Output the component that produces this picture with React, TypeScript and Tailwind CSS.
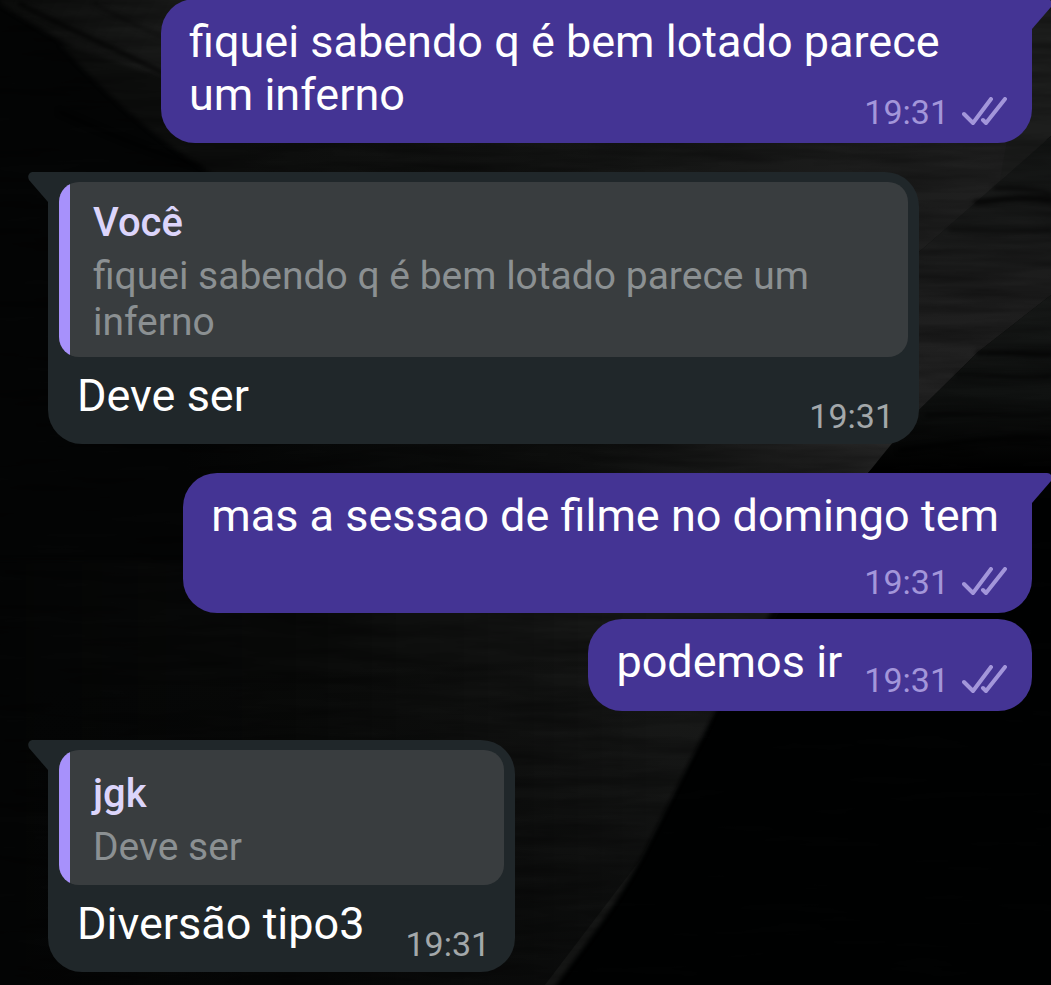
import type { ReactNode } from "react";
import clsx from "clsx";

type Quote = { author: string; text: string };

type Message = {
  id: number;
  side: "in" | "out";
  text: string;
  time: string;
  quote?: Quote;
  /** first bubble of a group gets the pointed corner */
  tail?: boolean;
  /** where the time sits relative to the text */
  meta: "inline" | "below" | "float";
};

const MESSAGES: Message[] = [
  { id: 1, side: "out", text: "fiquei sabendo q é bem lotado parece um inferno", time: "19:31", tail: true, meta: "float" },
  {
    id: 2,
    side: "in",
    text: "Deve ser",
    time: "19:31",
    tail: true,
    meta: "inline",
    quote: { author: "Você", text: "fiquei sabendo q é bem lotado parece um inferno" },
  },
  { id: 3, side: "out", text: "mas a sessao de filme no domingo tem", time: "19:31", tail: true, meta: "below" },
  { id: 4, side: "out", text: "podemos ir", time: "19:31", meta: "inline" },
  { id: 5, side: "in", text: "Diversão tipo3", time: "19:31", tail: true, meta: "inline", quote: { author: "jgk", text: "Deve ser" } },
];

function Wallpaper() {
  return (
    <svg
      className="absolute inset-0 h-full w-full"
      viewBox="0 0 1051 985"
      preserveAspectRatio="none"
      aria-hidden="true"
    >
      <defs>
        <linearGradient id="topLeft" x1="0" y1="0" x2="1" y2="0.3">
          <stop offset="0" stopColor="#0c0d0c" />
          <stop offset="0.4" stopColor="#191a19" />
          <stop offset="1" stopColor="#161716" />
        </linearGradient>
        <linearGradient id="ridge" x1="0" y1="0" x2="1" y2="0">
          <stop offset="0" stopColor="#0d0e0d" />
          <stop offset="0.5" stopColor="#151615" />
          <stop offset="1" stopColor="#222222" />
        </linearGradient>
        <linearGradient id="slope" x1="0" y1="0" x2="0" y2="1">
          <stop offset="0" stopColor="#141615" />
          <stop offset="0.5" stopColor="#1e1e1e" />
          <stop offset="1" stopColor="#282828" />
        </linearGradient>
        <linearGradient id="shade" x1="0" y1="0" x2="0" y2="1">
          <stop offset="0" stopColor="#181a19" />
          <stop offset="0.6" stopColor="#0f1110" />
          <stop offset="1" stopColor="#000000" />
        </linearGradient>
        <linearGradient id="strip" x1="0" y1="0" x2="1" y2="0">
          <stop offset="0.2" stopColor="#040505" />
          <stop offset="0.65" stopColor="#0e0f0e" />
          <stop offset="1" stopColor="#282828" />
        </linearGradient>
        <linearGradient id="base" x1="0" y1="0" x2="1" y2="0">
          <stop offset="0" stopColor="#040505" />
          <stop offset="0.4" stopColor="#0a0b0a" />
          <stop offset="0.85" stopColor="#1a1b1a" />
          <stop offset="1" stopColor="#202120" />
        </linearGradient>
        <linearGradient id="baseFade" x1="0" y1="0" x2="0" y2="1">
          <stop offset="0.2" stopColor="#040505" stopOpacity="0" />
          <stop offset="1" stopColor="#040505" stopOpacity="0.6" />
        </linearGradient>
        <filter id="soft" x="-5%" y="-5%" width="110%" height="110%" colorInterpolationFilters="sRGB">
          <feGaussianBlur stdDeviation="2" />
        </filter>
        <filter id="grain" x="0" y="0" width="100%" height="100%" colorInterpolationFilters="sRGB">
          <feTurbulence type="fractalNoise" baseFrequency="0.008 0.08" numOctaves="3" seed="7" />
          <feColorMatrix values="0 0 0 0 0  0 0 0 0 0  0 0 0 0 0  1.6 0 0 0 -0.5" />
        </filter>
      </defs>

      <rect width="1051" height="985" fill="#040505" />
      <g filter="url(#soft)">
        <path d="M0 -10H420V200C300 170 120 80 0 4Z" fill="url(#topLeft)" />
        <path d="M60 44L160 76L420 170V210H280C190 170 120 110 60 44Z" fill="#0d0e0d" />
      </g>
      <path d="M240 140H1060V130L919 252L860 300H240Z" fill="url(#ridge)" />
      <path d="M1032 0H1051V136L1000 180Z" fill="#1d1e1d" />
      <path d="M1051 136L919 252L860 310V480L868 472L919 410L978 352L1051 295Z" fill="url(#slope)" />
      <path d="M0 430H910L868 473H0Z" fill="url(#strip)" />
      <path d="M1051 295L978 352L919 410L868 473H1051Z" fill="url(#shade)" />
      <path d="M868 473H1051V985H545L708 725Z" fill="#010202" />
      <g filter="url(#soft)">
        <path d="M-10 560H800C745 660 725 690 708 725L640 860C612 912 588 940 545 1000H-10Z" fill="url(#base)" />
      </g>
      <path d="M0 560H800L708 725L640 860L545 985H0Z" fill="url(#baseFade)" />

      <g fill="none" stroke="#000" strokeLinecap="round" filter="url(#soft)">
        <path d="M20 4C70 30 110 46 165 74" strokeWidth="4" strokeOpacity="0.7" />
        <path d="M95 4C120 18 140 28 162 36" strokeWidth="3" strokeOpacity="0.4" />
        <path d="M60 112C105 132 150 152 200 166" strokeWidth="4" strokeOpacity="0.5" />
        <path d="M976 202C1000 200 1020 194 1051 200" strokeWidth="5" strokeOpacity="0.7" />
        <path d="M995 188C1020 188 1035 190 1051 194" strokeWidth="3" strokeOpacity="0.7" />
        <path d="M950 230C990 230 1020 232 1051 230" strokeWidth="3" strokeOpacity="0.5" />
        <path d="M978 353C1010 352 1030 355 1051 354" strokeWidth="5" strokeOpacity="0.7" />
        <path d="M956 375C990 373 1020 380 1051 376" strokeWidth="3" strokeOpacity="0.7" />
        <path d="M926 415C970 412 1010 418 1051 414" strokeWidth="3" strokeOpacity="0.6" />
        <path d="M900 450C940 446 990 436 1051 438" strokeWidth="5" strokeOpacity="0.6" />
      </g>
      <rect width="1051" height="985" filter="url(#grain)" opacity="0.4" />
    </svg>
  );
}

function Ticks() {
  return (
    <svg
      width="45"
      height="30"
      viewBox="0 0 45 30"
      fill="none"
      stroke="currentColor"
      strokeWidth="4"
      strokeLinecap="round"
      strokeLinejoin="round"
      role="img"
      aria-label="Entregue"
    >
      <path d="M2 17L11 26L29 2" />
      <path d="M21 23L24 26L43 2" />
    </svg>
  );
}

function Tail({ side }: { side: Message["side"] }) {
  return (
    <svg
      className={clsx("absolute top-0", side === "out" ? "-right-5 -scale-x-100 text-[#443494]" : "-left-5 text-[#20272a]")}
      width="21"
      height="30"
      viewBox="0 0 21 30"
      fill="currentColor"
      aria-hidden="true"
    >
      <path d="M21 0H5C1 0-1 4 1 8L20 30H21Z" />
    </svg>
  );
}

function QuoteBlock({ quote }: { quote: Quote }) {
  return (
    <blockquote className="mx-[11px] mt-[10px] flex min-h-[135px] overflow-hidden rounded-[20px] bg-[#393d3f]">
      <div className="w-[11px] shrink-0 bg-[#a791fb]" />
      <div className="flex flex-col justify-center gap-[7px] pt-[18px] pr-[22px] pb-3 pl-[23px] text-[39px] leading-[46px]">
        <cite className="text-[40px] font-medium text-[#dcd5fb] not-italic">{quote.author}</cite>
        <p className="text-[#8b9092]">{quote.text}</p>
      </div>
    </blockquote>
  );
}

function Meta({ children, sent }: { children: ReactNode; sent: boolean }) {
  return (
    <div
      className={clsx(
        "flex shrink-0 items-center gap-[13px] text-[34px] leading-10",
        sent ? "text-[#a396da]" : "text-[#a3a8aa]",
      )}
    >
      <time>{children}</time>
      {sent && <Ticks />}
    </div>
  );
}

function Bubble({ message }: { message: Message }) {
  const { side, text, time, quote, tail, meta } = message;
  const sent = side === "out";

  return (
    <li
      className={clsx(
        "relative max-w-[871px] text-[45px] leading-[53px] text-white",
        sent ? "self-end bg-[#443494]" : "self-start bg-[#20272a]",
        !tail && "-mt-[23px] rounded-[34px]",
        tail && sent && "rounded-[34px] rounded-tr-none",
        tail && !sent && "rounded-[34px] rounded-tl-none",
      )}
    >
      {tail && <Tail side={side} />}
      {quote && <QuoteBlock quote={quote} />}
      <div
        className={clsx(
          "pr-[25px]",
          quote ? "pt-3 pb-2 pl-[29px]" : "pt-4 pb-[11px] pl-7",
          meta === "inline" && "flex items-end justify-between",
          meta === "inline" && (sent ? "gap-[22px]" : "gap-[41px]"),
          meta === "below" && "flex flex-col items-end gap-5",
          meta === "float" && "flow-root",
        )}
      >
        <p
          className={clsx(
            meta === "inline" && (sent ? "mb-3" : "mb-[14px]"),
            meta === "below" && "pr-2",
            meta === "float" && "inline",
          )}
        >
          {text}
        </p>
        <div className={clsx(meta === "float" && "float-right mt-6")}>
          <Meta sent={sent}>{time}</Meta>
        </div>
      </div>
    </li>
  );
}

export default function App() {
  return (
    <main className="relative min-h-screen overflow-hidden bg-black font-[Roboto,'Noto_Sans',sans-serif]">
      <Wallpaper />
      <ul className="relative -mt-px flex flex-col gap-[29px] pr-[19px] pb-3 pl-12">
        {MESSAGES.map((m) => (
          <Bubble key={m.id} message={m} />
        ))}
      </ul>
    </main>
  );
}
